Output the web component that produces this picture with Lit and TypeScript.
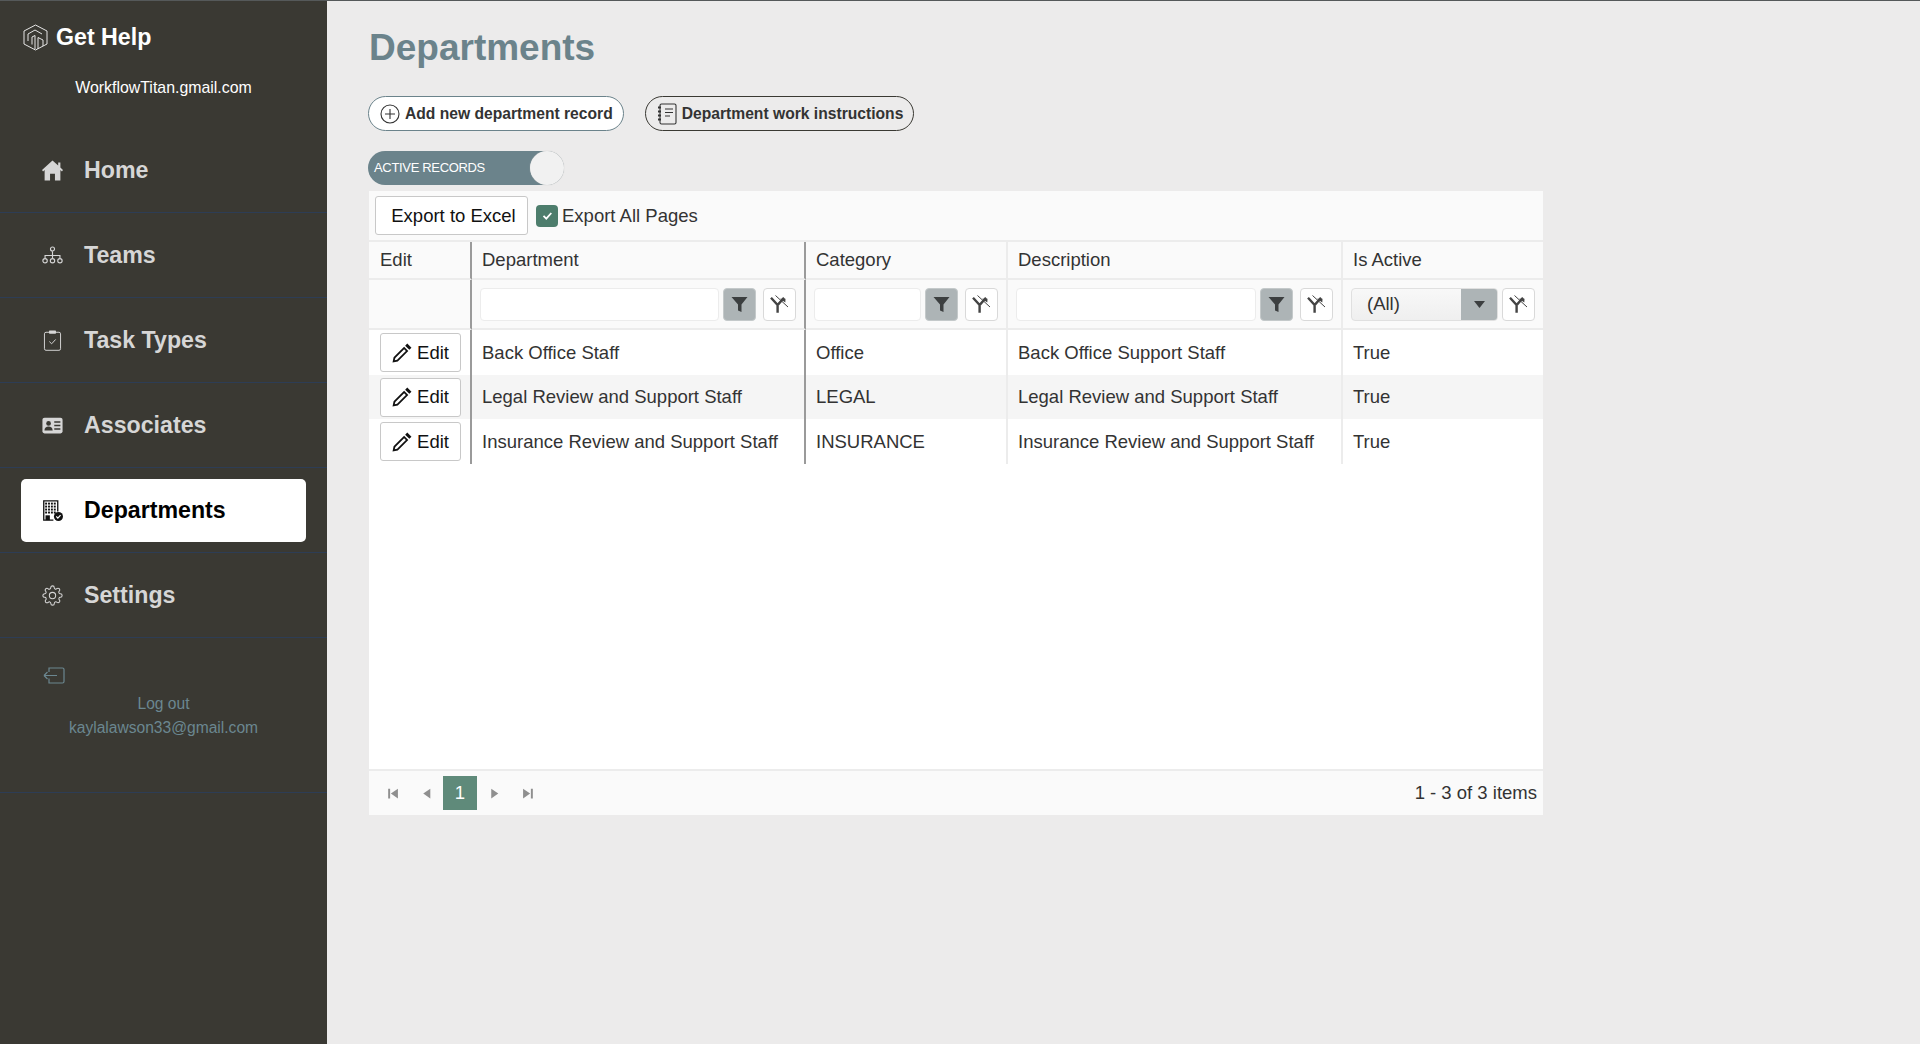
import { LitElement, css, html, svg } from "lit";
import { customElement } from "lit/decorators.js";

const dots = [3.6, 6.9, 10.2, 13.5].flatMap((x) =>
  [3, 6.4, 9.8, 13.2].map((y) => svg`<rect x=${x} y=${y} width="2.2" height="2.2"/>`)
);

const icons = {
  home: svg`<path fill="currentColor" d="M12 .5 L18.500 6.400 V2.800 H21 V8.700 L24 11.500 L22.800 13 L21 11.400 V23.500 H14.800 V15.800 H9.200 V23.500 H3 V11.400 L1.200 13 L0 11.500 Z"/>`,
  teams: svg`<g fill="none" stroke="currentColor" stroke-width="1.3"><circle cx="12" cy="4.6" r="2.3"/><path d="M12 7v5M3.5 15v-3h17v3M12 12v3"/><circle cx="3.5" cy="18" r="2.5"/><circle cx="12" cy="18" r="2.5"/><circle cx="20.5" cy="18" r="2.5"/></g>`,
  task: svg`<g fill="none" stroke="currentColor" stroke-width="1.1"><rect x="2.800" y="2.600" width="18.400" height="20.600" rx="1.800"/><path d="M8.400 13.200l2.600 2.600 4.600-5"/></g><rect x="8" y=".6" width="8" height="3.600" rx=".8" fill="currentColor"/>`,
  card: svg`<rect x=".5" y="3" width="23" height="18" rx="2.4" fill="currentColor"/><circle cx="7.5" cy="9.6" r="2.7" fill="#3a3933"/><path d="M2.800 17.600c0-3 2-4.600 4.700-4.600s4.700 1.600 4.700 4.600z" fill="#3a3933"/><path d="M14 8h7M14 12h7M14 16h7" stroke="#3a3933" stroke-width="1.800"/>`,
  dept: svg`<path fill="none" stroke="#111" stroke-width="1.500" d="M13 23H2V1h16v12"/><g fill="#111">${dots}</g><path fill="#111" d="M4 17.500h5V23H4z"/><circle cx="18.800" cy="18.800" r="5.200" fill="#111"/><path d="M16.300 18.800l1.800 1.900 3.100-3.400" fill="none" stroke="#fff" stroke-width="1.400"/>`,
  gear: svg`<g fill="none" stroke="currentColor" stroke-width="1.2"><circle cx="12" cy="12" r="3.6"/><path d="M19.4 15a1.65 1.65 0 0 0 .33 1.82l.06.06a2 2 0 0 1 0 2.83 2 2 0 0 1-2.83 0l-.06-.06a1.65 1.65 0 0 0-1.82-.33 1.65 1.65 0 0 0-1 1.51V21a2 2 0 0 1-2 2 2 2 0 0 1-2-2v-.09A1.65 1.65 0 0 0 9 19.4a1.65 1.65 0 0 0-1.82.33l-.06.06a2 2 0 0 1-2.83 0 2 2 0 0 1 0-2.83l.06-.06a1.65 1.65 0 0 0 .33-1.82 1.65 1.65 0 0 0-1.51-1H3a2 2 0 0 1-2-2 2 2 0 0 1 2-2h.09A1.65 1.65 0 0 0 4.6 9a1.65 1.65 0 0 0-.33-1.82l-.06-.06a2 2 0 0 1 0-2.83 2 2 0 0 1 2.83 0l.06.06a1.65 1.65 0 0 0 1.82.33H9a1.65 1.65 0 0 0 1-1.51V3a2 2 0 0 1 2-2 2 2 0 0 1 2 2v.09a1.65 1.65 0 0 0 1 1.51 1.65 1.65 0 0 0 1.82-.33l.06-.06a2 2 0 0 1 2.83 0 2 2 0 0 1 0 2.83l-.06.06a1.65 1.65 0 0 0-.33 1.82V9a1.65 1.65 0 0 0 1.51 1H21a2 2 0 0 1 2 2 2 2 0 0 1-2 2h-.09a1.65 1.65 0 0 0-1.51 1z"/></g>`,
};

const navItems = [
  { label: "Home", icon: icons.home },
  { label: "Teams", icon: icons.teams },
  { label: "Task Types", icon: icons.task },
  { label: "Associates", icon: icons.card },
  { label: "Departments", icon: icons.dept, active: true },
  { label: "Settings", icon: icons.gear },
];

const rows = [
  ["Back Office Staff", "Office", "Back Office Support Staff", "True"],
  ["Legal Review and Support Staff", "LEGAL", "Legal Review and Support Staff", "True"],
  ["Insurance Review and Support Staff", "INSURANCE", "Insurance Review and Support Staff", "True"],
];

@customElement("app-root")
export class AppRoot extends LitElement {
  static styles = css`
    :host {
      display: flex;
      width: 1920px;
      height: 1044px;
      overflow: hidden;
      background: #ecebeb;
      font-family: "Liberation Sans", Arial, sans-serif;
      border-top: 1px solid #55595a;
      box-sizing: border-box;
    }
    svg {
      display: block;
      flex: none;
    }

    .side {
      width: 327px;
      flex: none;
      background: #3a3933;
      box-sizing: border-box;
    }
    .brand {
      display: flex;
      align-items: center;
      height: 73px;
      padding-left: 23px;
      gap: 8px;
      color: #fff;
      font-size: 23.2px;
      font-weight: 700;
    }
    .mail {
      height: 54px;
      text-align: center;
      color: #fff;
      font-size: 15.9px;
      line-height: 28px;
    }
    .nav-item {
      height: 85px;
      box-sizing: border-box;
      border-bottom: 1px solid #2d3d55;
      padding: 11px 21px 10px;
    }
    .nav-link {
      display: flex;
      align-items: center;
      height: 63px;
      padding-left: 21px;
      gap: 21px;
      color: #d6d6d6;
      font-size: 23.2px;
      font-weight: 700;
      border-radius: 5px;
    }
    .nav-link.active {
      background: #fff;
      color: #000;
    }
    .logout {
      height: 155px;
      box-sizing: border-box;
      border-bottom: 1px solid #2d3d55;
      padding: 29px 0 0 43px;
      color: #6b8790;
      font-size: 15.6px;
    }
    .logout-text {
      margin: 8px 0 0 -43px;
      text-align: center;
      line-height: 24px;
    }

    .main {
      flex: 1;
      padding-left: 42px;
    }
    h1 {
      margin: 0;
      padding-top: 25px;
      height: 95px;
      box-sizing: border-box;
      font-size: 37px;
      line-height: 44px;
      font-weight: 700;
      color: #6b838b;
    }
    .actions {
      display: flex;
      gap: 21px;
      margin-left: -1px;
    }
    .pill {
      display: flex;
      align-items: center;
      height: 35px;
      box-sizing: border-box;
      padding: 0 10px 0 11px;
      gap: 5px;
      border-radius: 18px;
      font-size: 15.65px;
      font-weight: 700;
      color: #333;
    }
    .pill.add {
      background: #fff;
      border: 1px solid #6b838b;
    }
    .pill.doc {
      border: 1px solid #3a3933;
    }
    .toggle {
      display: flex;
      align-items: center;
      position: relative;
      margin: 20px 0 6px -1px;
      width: 196px;
      height: 34px;
      box-sizing: border-box;
      padding: 0 0 2px 6px;
      border-radius: 17px;
      background: #6b838b;
      color: #fff;
      font-size: 13px;
      letter-spacing: -0.33px;
    }
    .knob {
      position: absolute;
      right: 0;
      top: 0;
      width: 34px;
      height: 34px;
      border-radius: 50%;
      background: #f1f1f1;
      box-shadow: 0 0 1px #bbb;
    }

    .grid {
      display: flex;
      flex-direction: column;
      width: 1174px;
      height: 624px;
      background: #fff;
      color: #333;
      font-size: 18.5px;
    }
    .toolbar {
      display: flex;
      align-items: center;
      height: 51px;
      flex: none;
      box-sizing: border-box;
      padding-left: 6px;
      background: #fafafa;
      border-bottom: 2px solid #ececec;
    }
    .btn {
      display: flex;
      align-items: center;
      justify-content: center;
      box-sizing: border-box;
      border: 1px solid #c8c8c8;
      border-radius: 3px;
      background: #fff;
      color: #111;
      font: inherit;
    }
    .export {
      width: 153px;
      height: 39px;
      padding-left: 4px;
    }
    .check {
      display: flex;
      align-items: center;
      justify-content: center;
      width: 22px;
      height: 22px;
      margin: 0 4px 0 8px;
      border-radius: 4px;
      background: #4d7d6c;
    }
    .grid-body {
      flex: 1;
    }
    table {
      width: 100%;
      table-layout: fixed;
      border-collapse: separate;
      border-spacing: 0;
    }
    th,
    td {
      box-sizing: border-box;
      padding: 0 10px;
      font-weight: 400;
      text-align: left;
      border-right: 2px solid #ececec;
      white-space: nowrap;
    }
    th:first-child,
    tbody td:first-child {
      padding-left: 11px;
    }
    th:last-child,
    td:last-child {
      border-right: 0;
    }
    th.hard,
    td.hard {
      border-right-color: #9a9a9a;
    }
    .head th {
      height: 38px;
      background: #fafafa;
      border-bottom: 2px solid #ececec;
    }
    .filters td {
      height: 50px;
      padding: 0 8px;
      background: #fafafa;
      border-bottom: 2px solid #ececec;
    }
    tbody td {
      height: 45px;
    }
    tbody tr.alt td {
      height: 44px;
      background: #f5f5f5;
    }
    .filter-cell {
      display: flex;
      align-items: center;
      gap: 4px;
    }
    .input {
      flex: 1;
      height: 33px;
      box-sizing: border-box;
      border: 1px solid #ececec;
      border-radius: 4px;
      background: #fff;
    }
    .f-btn,
    .f-clear {
      display: flex;
      align-items: center;
      justify-content: center;
      width: 33px;
      height: 33px;
      flex: none;
      box-sizing: border-box;
      border-radius: 4px;
    }
    .f-btn {
      background: #adb4b6;
      border: 1px solid #c4c9ca;
    }
    .f-clear {
      margin-left: 3px;
      background: #fff;
      border: 1px solid #d9d9d9;
    }
    .f-clear.flush {
      margin-left: 0;
    }
    .select {
      display: flex;
      flex: 1;
      align-items: center;
      height: 33px;
      box-sizing: border-box;
      border: 1px solid #e0e0e0;
      border-radius: 4px;
      background: linear-gradient(#f8f8f8, #efefef);
      padding-left: 15px;
      overflow: hidden;
    }
    .select span {
      flex: 1;
    }
    .arrow {
      display: flex;
      align-items: center;
      justify-content: center;
      width: 36px;
      height: 33px;
      background: #adb4b6;
    }
    .edit {
      width: 81px;
      height: 39px;
      gap: 5px;
    }
    .pager {
      display: flex;
      align-items: center;
      height: 46px;
      flex: none;
      box-sizing: border-box;
      padding: 0 6px;
      background: #fafafa;
      border-top: 2px solid #ececec;
    }
    .pg {
      display: flex;
      align-items: center;
      justify-content: center;
      width: 34px;
      height: 34px;
    }
    .pg.cur {
      background: #5f8a7a;
      color: #fff;
    }
    .count {
      margin-left: auto;
    }
  `;

  private funnel() {
    return html`<svg width="17" height="17" viewBox="0 0 17 17"><path fill="#3c3f40" d="M.5 1h16l-6 7.500V16l-3.500-1.500v-6z"/></svg>`;
  }

  private filterClear(flush = false) {
    return html`<div class="f-clear ${flush ? "flush" : ""}">
      <svg width="19" height="19" viewBox="0 0 19 19" fill="none" stroke="#444">
        <path stroke-width="2.400" d="M1 2.800l6.600 7.200v7.800M8.200 9.400l5.800-6.600"/>
        <path stroke-width="1" d="M5.500 .5L18 12"/>
        <path fill="#444" stroke="none" d="M10 3.800h5.500l-.2 3.600z"/>
      </svg>
    </div>`;
  }

  private filterRow(hard: boolean) {
    return html`<td class=${hard ? "hard" : ""}>
      <div class="filter-cell">
        <div class="input"></div>
        <div class="f-btn">${this.funnel()}</div>
        ${this.filterClear()}
      </div>
    </td>`;
  }

  private pagerIcon(d: string) {
    return html`<div class="pg"><svg width="13" height="13" viewBox="0 0 12 12"><path fill="#8f8f8f" d=${d}/></svg></div>`;
  }

  render() {
    return html`
      <aside class="side">
        <div class="brand">
          <svg width="25" height="27" viewBox="0 0 25 27" fill="none" stroke="#e6e6e6" stroke-width="1">
            <path d="M12.500 1 L24 7 V20 L12.500 26 L1 20 V7 Z"/>
            <path d="M5 17 V10 L12 6 L19 10 M9 20.500 V13 L12 11.500 V25 M15 25 V13.500 L20 16 V22"/>
          </svg>
          Get Help
        </div>
        <div class="mail">WorkflowTitan.gmail.com</div>
        ${navItems.map(
          (n) => html`<div class="nav-item">
            <div class="nav-link ${n.active ? "active" : ""}">
              <svg width="21" height="21" viewBox="0 0 24 24">${n.icon}</svg>
              ${n.label}
            </div>
          </div>`
        )}
        <div class="logout">
          <svg width="22" height="17" viewBox="0 0 22 17" fill="none" stroke="currentColor" stroke-width="1.200">
            <path d="M6 5V1h13.500a1.500 1.500 0 0 1 1.500 1.500v12a1.500 1.500 0 0 1-1.500 1.500H6v-4.500M1 8.500h13M1 8.500l3.500-3.500M1 8.500l3.500 3.500"/>
          </svg>
          <div class="logout-text">Log out<br />kaylalawson33@gmail.com</div>
        </div>
      </aside>
      <main class="main">
        <h1>Departments</h1>
        <div class="actions">
          <div class="pill add">
            <svg width="20" height="20" viewBox="0 0 20 20" fill="none" stroke="#333" stroke-width="1.100">
              <circle cx="10" cy="10" r="9"/><path d="M10 5v10M5 10h10"/>
            </svg>
            Add new department record
          </div>
          <div class="pill doc">
            <svg width="20" height="22" viewBox="0 0 20 22" fill="none" stroke="#333" stroke-width="1.100">
              <rect x="3" y="1" width="16" height="20" rx="1.500"/>
              <path d="M8 6h8M8 9.500h8M8 13h5"/>
              <path stroke-width="1.800" d="M1 4.500h3M1 8.500h3M1 12.500h3M1 16.500h3"/>
            </svg>
            Department work instructions
          </div>
        </div>
        <div class="toggle">ACTIVE RECORDS<span class="knob"></span></div>
        <section class="grid">
          <div class="toolbar">
            <div class="btn export">Export to Excel</div>
            <div class="check">
              <svg width="13" height="13" viewBox="0 0 13 13" fill="none" stroke="#fff" stroke-width="1.800"><path d="M2.500 6.800l2.800 2.800 5-5.600"/></svg>
            </div>
            Export All Pages
          </div>
          <div class="grid-body">
            <table>
              <colgroup>
                <col style="width:103px" /><col style="width:334px" /><col style="width:202px" /><col style="width:335px" /><col />
              </colgroup>
              <thead>
                <tr class="head">
                  <th class="hard">Edit</th>
                  <th class="hard">Department</th>
                  <th>Category</th>
                  <th>Description</th>
                  <th>Is Active</th>
                </tr>
                <tr class="filters">
                  <td class="hard"></td>
                  ${this.filterRow(true)}${this.filterRow(false)}${this.filterRow(false)}
                  <td>
                    <div class="filter-cell">
                      <div class="select">
                        <span>(All)</span>
                        <div class="arrow">
                          <svg width="11" height="7" viewBox="0 0 11 7"><path fill="#3c3f40" d="M0 0h11L5.500 7z"/></svg>
                        </div>
                      </div>
                      ${this.filterClear(true)}
                    </div>
                  </td>
                </tr>
              </thead>
              <tbody>
                ${rows.map(
                  (r, i) => html`<tr class=${i === 1 ? "alt" : ""}>
                    <td class="hard">
                      <div class="btn edit">
                        <svg width="20" height="20" viewBox="0 0 19 19"><path fill="#111" d="M14.500.5l4 4-2 2-4-4zM11.500 3.500l4 4-10 10L.5 18.500l1-5zM3.200 14.200l-.6 2.300 2.200-.6 8.400-8.300-1.700-1.700z"/></svg>
                        Edit
                      </div>
                    </td>
                    <td class="hard">${r[0]}</td>
                    <td>${r[1]}</td>
                    <td>${r[2]}</td>
                    <td>${r[3]}</td>
                  </tr>`
                )}
              </tbody>
            </table>
          </div>
          <div class="pager">
            ${this.pagerIcon("M2 1.500h1.800v9H2zM11 1.500v9L4.500 6z")}
            ${this.pagerIcon("M9.500 1.500v9L3 6z")}
            <div class="pg cur">1</div>
            ${this.pagerIcon("M3 1.500v9L9.500 6z")}
            ${this.pagerIcon("M1 1.500v9L7.500 6zM8.200 1.500H10v9H8.200z")}
            <div class="count">1 - 3 of 3 items</div>
          </div>
        </section>
      </main>
    `;
  }
}
